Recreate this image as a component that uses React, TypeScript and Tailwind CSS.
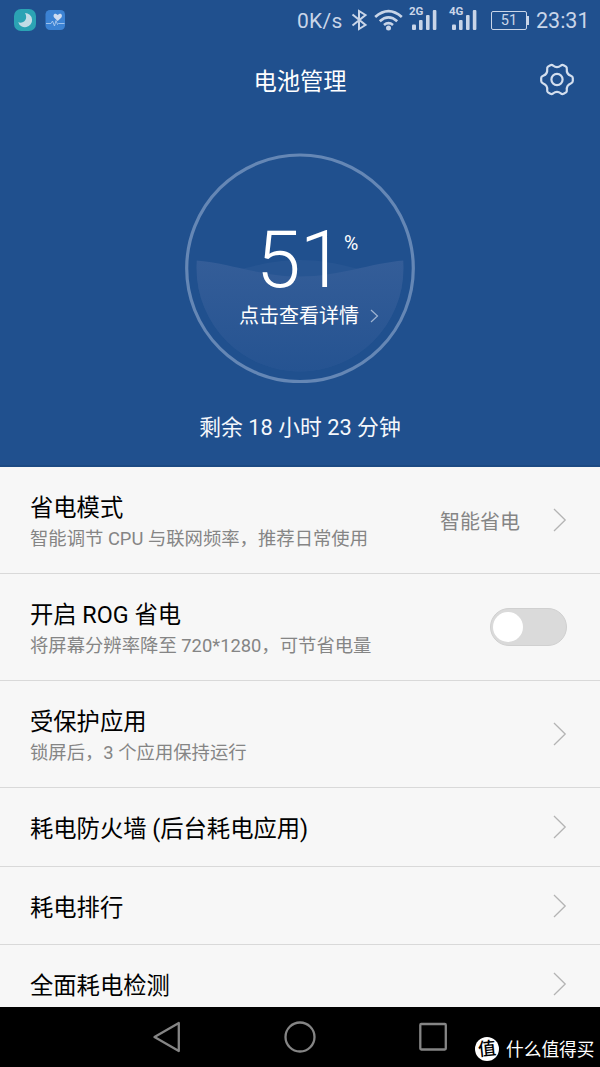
import type { ReactNode } from "react";

const Chevron = () => (
  <svg width="14" height="24" viewBox="0 0 14 24" fill="none" stroke="#b4b4b4" strokeWidth="1.3" className="shrink-0">
    <path d="M1 1 L12.2 12 L1 23" />
  </svg>
);

const Signal = ({ label }: { label: string }) => (
  <div className="relative h-[40px] w-[28px]">
    <span className="absolute left-0 top-[5px] text-[11.5px] leading-[13px] font-bold">{label}</span>
    <svg width="28" height="40" viewBox="0 0 28 40" fill="currentColor" className="block">
      <rect x="3" y="24.5" width="4" height="5.5" rx="1" />
      <rect x="10" y="20" width="3.6" height="10" rx="1" />
      <rect x="17" y="15" width="3.6" height="15" rx="1" />
      <rect x="23.8" y="10" width="3.6" height="20" rx="1" />
    </svg>
  </div>
);

const StatusBar = () => (
  <div className="flex h-[40px] items-center text-[#c9d5e8]">
    <svg width="52" height="22" viewBox="0 0 52 22" className="ml-[14px]">
      <rect x="0" y="0" width="22" height="22" rx="7" fill="#2ba3b4" />
      <path d="M11 4 A7.1 7.1 0 1 1 4.2 13.2 C8.5 15 14.8 11 11 4 Z" fill="#c3dce6" />
      <rect x="31.5" y="1" width="19.5" height="20" rx="4.5" fill="#3b82d3" />
      <path d="M43.7 12 L40.3 8.7 C38.5 6.5 40.3 4 42.2 4.9 Q43.2 5.2 43.7 6 Q44.2 5.2 45.2 4.9 C47.2 4 49 6.5 47.2 8.7 Z" fill="#cfdcf0" />
      <path d="M32 14.5 H37 L38.5 12 L40.5 17 L42 11.5 L43.5 15.5 L44.5 14.5 H50.5" fill="none" stroke="#a9c8ee" strokeWidth="0.9" />
    </svg>
    <span className="ml-[231px] w-[54px] pt-[2px] text-[21px] leading-[40px] tracking-[0.3px]">0K/s</span>
    <svg width="18" height="40" viewBox="0 0 18 40" fill="none" stroke="currentColor" strokeWidth="2" className="shrink-0">
      <path d="M1.5 14.5 L14.5 25 L8 29 V11 L14.5 15 L1.5 25.5" />
    </svg>
    <svg width="30" height="40" viewBox="0 0 30 40" fill="none" stroke="currentColor" strokeWidth="2.7" className="ml-[5px] shrink-0">
      <path d="M1.2 17 Q14.5 5.2 27.8 17" />
      <path d="M5.8 21.2 Q14.5 13.4 23.2 21.2" />
      <path d="M10 25 Q14.5 21.4 19 25" />
      <circle cx="14.5" cy="28" r="2.5" fill="currentColor" stroke="none" />
    </svg>
    <div className="ml-[5px]"><Signal label="2G" /></div>
    <div className="ml-[12px]"><Signal label="4G" /></div>
    <div className="ml-[14px] flex h-[19px] w-[36px] items-center justify-center rounded-[2px] border-[1.5px] border-[#c9d5e8] pt-[1px] text-[14.5px] leading-[16px]">51</div>
    <div className="h-[9px] w-[2px] bg-[#c9d5e8]" />
    <span className="ml-[7px] pt-[2px] text-[21.5px] leading-[40px]">23:31</span>
  </div>
);

const BatteryDial = () => (
  <div className="relative mx-auto mt-[33px] h-[230px] w-[230px]">
    <svg width="230" height="230" viewBox="0 0 230 230" className="block">
      <defs>
        <linearGradient id="water" x1="0" y1="107" x2="0" y2="219" gradientUnits="userSpaceOnUse">
          <stop offset="0" stopColor="#345d98" />
          <stop offset="1" stopColor="#255391" />
        </linearGradient>
        <clipPath id="bowl"><circle cx="115" cy="115" r="103.5" /></clipPath>
      </defs>
      <g clipPath="url(#bowl)">
        <path d="M11 124 C50 121 75 107 115 107 C155 107 180 121 219 124 V230 H11 Z" fill="#275592" />
        <path d="M11 107.5 C45 110 75 123.5 115 123.5 C155 123.5 185 110 219 107.5 V230 H11 Z" fill="url(#water)" />
      </g>
      <circle cx="115" cy="115.3" r="113.3" fill="none" stroke="#6587b5" strokeWidth="3.2" />
    </svg>
    <div className="absolute inset-0 text-white">
      <span className="absolute left-[71px] top-[70px] text-[80.5px] leading-[74px] font-light tracking-[-1px]">51</span>
      <span className="absolute left-[159px] top-[79px] text-[19.5px] leading-[24px]">%</span>
      <div className="absolute left-[54px] top-[149px] flex items-center text-[20px] leading-[26px]">
        <span className="pt-[1px]">点击查看详情</span>
        <svg width="9" height="14" viewBox="0 0 9 14" fill="none" stroke="#9fb4d2" strokeWidth="1.2" className="ml-[11px]">
          <path d="M1 1 L7.5 7 L1 13" />
        </svg>
      </div>
    </div>
  </div>
);

const Row = ({ title, sub, right }: { title: string; sub?: string; right: ReactNode }) => (
  <div className={`flex w-full shrink-0 items-center justify-between border-b border-[#d9d9d9] pl-[30px] pr-[33px] ${sub ? "h-[107px]" : "h-[78.7px]"}`}>
    <div className="whitespace-nowrap pt-[4px]">
      <div className="text-[23.3px] leading-[34px] text-black">{title}</div>
      {sub && <div className="text-[18.35px] leading-[28px] text-[#858585]">{sub}</div>}
    </div>
    <div className="flex items-center">{right}</div>
  </div>
);

const NavBar = () => (
  <div className="flex h-[60px] items-start bg-black">
    <svg width="296" height="60" viewBox="0 0 296 60" fill="none" stroke="#858585" strokeWidth="2.3" strokeLinejoin="round" className="ml-[152px] shrink-0">
      <path d="M2.5 30 L26.8 16 V44 Z" />
      <circle cx="148" cy="30" r="14.5" />
      <rect x="268.3" y="17" width="25.5" height="25.5" rx="1" />
    </svg>
    <div className="ml-[27px] mt-[30px] flex h-[24px] w-[24px] shrink-0 items-center justify-center rounded-full bg-white text-[18px] leading-[24px] font-medium text-black">
      <span className="-rotate-6">值</span>
    </div>
    <span className="ml-[7px] mt-[29px] whitespace-nowrap text-[17.7px] leading-[28px] text-white">什么值得买</span>
  </div>
);

export default function App() {
  return (
    <div className="flex h-[1067px] w-[600px] flex-col overflow-hidden bg-[#f7f7f7] font-['Roboto','Noto_Sans_CJK_SC',sans-serif]">
      <header className="h-[467px] shrink-0 border-b-2 border-[#1c4a83] bg-[#20508e]">
        <StatusBar />
        <div className="grid h-[80px] grid-cols-[1fr_auto_1fr] items-center">
          <h1 className="col-start-2 pt-[4px] text-[23.3px] leading-[34px] text-white">电池管理</h1>
          <svg width="36" height="36" viewBox="0 0 36 36" fill="none" stroke="#d3deee" strokeWidth="2.2" strokeLinejoin="round" className="mr-[25px] justify-self-end">
            <path d="M14 3.5 Q18 6.8 22 3.5 Q23.2 2.6 24.6 3.2 L27 4.6 Q28 5.5 27.8 7 Q27.3 12 31.8 13.8 Q33.8 14.6 33.8 16 V19 Q33.8 20.6 31.8 21.4 Q27.3 23.2 27.8 28 Q28 29.6 27 30.4 L24.6 31.8 Q23.2 32.4 22 31.5 Q18 28.2 14 31.5 Q12.8 32.4 11.4 31.8 L9 30.4 Q8 29.6 8.2 28 Q8.7 23.2 4.2 21.4 Q2.2 20.6 2.2 19 V16 Q2.2 14.6 4.2 13.8 Q8.7 12 8.2 7 Q8 5.5 9 4.6 L11.4 3.2 Q12.8 2.6 14 3.5 Z" />
            <circle cx="18" cy="17.5" r="5.6" />
          </svg>
        </div>
        <BatteryDial />
        <p className="mt-[29px] text-center text-[21.8px] leading-[32px] text-[#f4f7fb]">剩余 18 小时 23 分钟</p>
      </header>
      <main className="flex h-[540px] shrink-0 flex-col overflow-hidden">
        <Row title="省电模式" sub="智能调节 CPU 与联网频率，推荐日常使用" right={<><span className="mr-[33px] pt-[4px] text-[20px] leading-[30px] text-[#858585]">智能省电</span><Chevron /></>} />
        <Row
          title="开启 ROG 省电"
          sub="将屏幕分辨率降至 720*1280，可节省电量"
          right={<button type="button" role="switch" aria-checked="false" className="flex h-[38px] w-[77px] items-center rounded-full border border-[#d0d0d0] bg-[#dadada] pl-[2px]"><span className="h-[30px] w-[30px] rounded-full bg-white" /></button>}
        />
        <Row title="受保护应用" sub="锁屏后，3 个应用保持运行" right={<Chevron />} />
        <Row title="耗电防火墙 (后台耗电应用)" right={<Chevron />} />
        <Row title="耗电排行" right={<Chevron />} />
        <Row title="全面耗电检测" right={<Chevron />} />
      </main>
      <NavBar />
    </div>
  );
}
